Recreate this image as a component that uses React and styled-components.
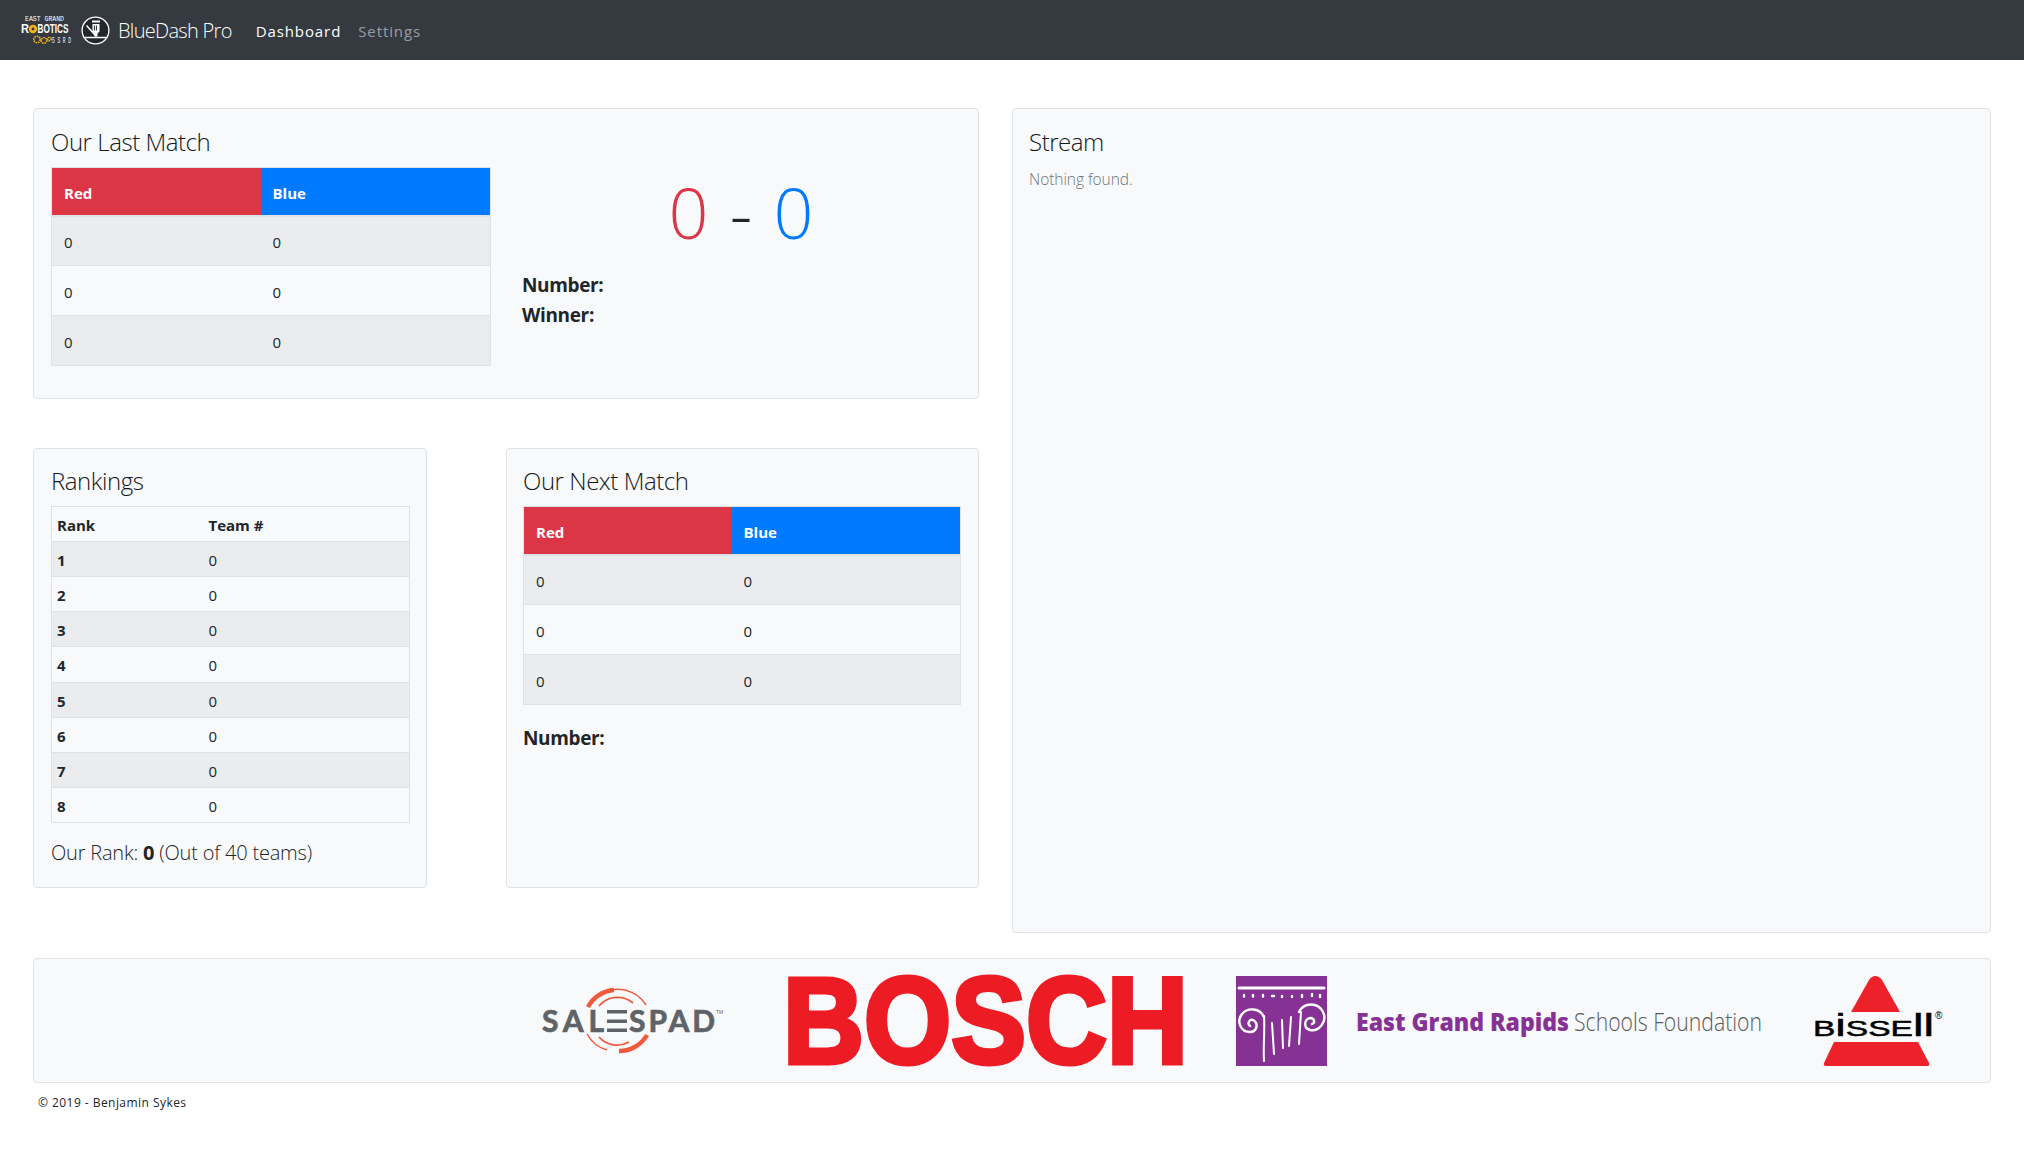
import React from "react";
import styled, { createGlobalStyle } from "styled-components";

const FONT = `"Open Sans", "Noto Sans", "Liberation Sans", sans-serif`;

const Global = createGlobalStyle`
  html, body { margin: 0; padding: 0; background: #fff; }
  body { font-family: ${FONT}; color: #212529; }
  * { box-sizing: border-box; }
  svg { overflow: visible; }
`;

const Navbar = styled.nav`
  height: 60px;
  background: #343a40;
  display: flex;
  align-items: center;
  padding-left: 20px;
`;
const BrandLogos = styled.div`
  display: flex;
  align-items: center;
  gap: 9px;
`;
const BrandName = styled.span`
  margin-left: 8px;
  color: #fff;
  font-size: 20px;
  font-weight: 300;
  letter-spacing: -0.7px;
`;
const NavLinks = styled.div`
  display: flex;
  gap: 17px;
  margin-left: 24px;
  padding-top: 2px;
`;
const NavLink = styled.span`
  font-size: 15px;
  letter-spacing: 0.9px;
  color: ${(p) => (p.$active ? "#fff" : "rgba(255,255,255,.5)")};
`;

const Main = styled.main`
  padding: 48px 33px 0;
  display: grid;
  grid-template-columns: 946px 979px;
  column-gap: 33px;
`;
const LeftColumn = styled.div`
  display: flex;
  flex-direction: column;
  gap: 49px;
  padding-bottom: 45px;
`;
const Card = styled.section`
  background: #f8f9fa;
  border: 1px solid #dfe3e7;
  border-radius: 4px;
  padding: ${(p) => p.$top || 12}px 16px 0 ${(p) => p.$left || 16}px;
  height: ${(p) => (p.$height ? `${p.$height}px` : "auto")};
`;
const Title = styled.h4`
  margin: 0 0 5px;
  font-size: 24px;
  line-height: 40px;
  font-weight: 350;
  letter-spacing: -0.45px;
  color: #15181b;
`;
const MatchBody = styled.div`
  display: flex;
  gap: 31px;
`;
const ScorePanel = styled.div`
  width: 438px;
  display: flex;
  flex-direction: column;
`;
const Score = styled.div`
  text-align: center;
  font-size: 70px;
  font-weight: 300;
  line-height: 90px;
  height: 98px;
  margin-bottom: 6px;
  word-spacing: 3px;
  color: #212529;
`;
const ScoreRed = styled.span`color: #dc3545;`;
const ScoreBlue = styled.span`color: #007bff;`;
const Fact = styled.div`
  font-size: 19px;
  font-weight: 700;
  line-height: 29.5px;
  letter-spacing: -0.35px;
`;
const LowerRow = styled.div`
  display: grid;
  grid-template-columns: 394px 473px;
  column-gap: 79px;
`;
const MatchTable = styled.table`
  width: ${(p) => p.$width}px;
  height: 199px;
  table-layout: fixed;
  border-collapse: collapse;
  border: 1px solid #dee2e6;
  font-size: 15px;
  flex: none;
`;
const TeamHead = styled.th`
  height: 48px;
  padding: 4px 12px 0;
  width: ${(p) => (p.$w ? `${p.$w}px` : "auto")};
  text-align: left;
  color: #fff;
  font-weight: 700;
  font-size: 15px;
  background: ${(p) => (p.$red ? "#dc3545" : "#007bff")};
  border-bottom: 2px solid #dee2e6;
`;
const Row = styled.tr`
  background: ${(p) => (p.$odd ? "#ebecee" : "transparent")};
`;
const Cell = styled.td`
  height: 49px;
  padding: 3px 12px 0;
  border-top: 1px solid #dee2e6;
`;
const RankTable = styled.table`
  width: 359px;
  height: 317px;
  table-layout: fixed;
  border-collapse: collapse;
  border: 1px solid #dee2e6;
  font-size: 15px;
`;
const RankHead = styled.th`
  height: 35px;
  padding: 2px 5px 0;
  text-align: left;
  width: ${(p) => p.$w || "auto"};
  font-weight: 700;
`;
const RankCell = styled.td`
  height: 35px;
  padding: 2px 5px 0;
  border-top: 1px solid #dee2e6;
  font-weight: ${(p) => (p.$bold ? 700 : 400)};
`;
const RankLine = styled.p`
  margin: 16px 0 0;
  font-size: 20px;
  line-height: 28px;
  font-weight: 300;
  letter-spacing: -0.2px;
  color: #212529;
  b { font-weight: 700; }
`;
const NextFact = styled(Fact)`
  margin-top: 19px;
`;
const Muted = styled.p`
  margin: 3px 0 0;
  font-size: 15.5px;
  line-height: 24px;
  font-weight: 300;
  letter-spacing: -0.05px;
  color: #6c757d;
`;
const SponsorBar = styled.section`
  margin: 25px 33px 0;
  height: 125px;
  background: #f8f9fa;
  border: 1px solid #dfe3e7;
  border-radius: 4px;
  display: flex;
  align-items: center;
  padding-top: 1px;
  padding-left: 507px;
`;
const SalesLogo = styled.svg`
  width: 183px; height: 66px; flex: none;
`;
const BoschLogo = styled.svg`
  width: 397px; height: 92px; margin-left: 63px; flex: none;
`;
const ColumnLogo = styled.svg`
  width: 91px; height: 90px; margin-left: 52px; flex: none;
`;
const EgrLogo = styled.svg`
  width: 406px; height: 40px; margin-left: 29px; flex: none;
`;
const BissellLogo = styled.svg`
  width: 132px; height: 92px; margin-left: 51px; flex: none;
`;
const Footer = styled.footer`
  margin: 11px 0 0 38px;
  font-size: 12px;
  line-height: 18px;
  letter-spacing: 0.45px;
  color: #212529;
`;

const RobLogo = () => (
  <svg width="52" height="30" viewBox="0 0 52 30">
    <text x="5" y="5.5" textLength="39" lengthAdjust="spacingAndGlyphs" fontFamily="Liberation Mono" fontSize="6.5" fill="#fff">EAST GRAND</text>
    <text x="1" y="18" textLength="8" lengthAdjust="spacingAndGlyphs" fontFamily="Liberation Sans" fontWeight="700" fontSize="12" fill="#fff">R</text>
    <circle cx="13" cy="14" r="4.2" fill="#f4b21a" />
    <circle cx="13" cy="14" r="1.4" fill="#343a40" />
    <text x="17.5" y="18" textLength="31" lengthAdjust="spacingAndGlyphs" fontFamily="Liberation Sans" fontWeight="700" fontSize="12" fill="#fff">BOTICS</text>
    <g fill="none" stroke="#f4b21a" strokeWidth="1.6">
      <circle cx="17" cy="24.5" r="3.2" strokeDasharray="1.6 .8" />
      <circle cx="24" cy="25.5" r="2.8" strokeDasharray="1.6 .8" />
      <circle cx="29.5" cy="24" r="1.8" strokeDasharray="1.4 .7" />
    </g>
    <text x="32" y="28" textLength="19" lengthAdjust="spacingAndGlyphs" fontFamily="Liberation Mono" fontSize="9" fill="#fff">5 S R D</text>
  </svg>
);

const CncLogo = () => (
  <svg width="29" height="29" viewBox="0 0 29 29">
    <circle cx="14.5" cy="14.5" r="13.4" fill="#23272b" stroke="#fff" strokeWidth="1.3" />
    <rect x="11" y="4.5" width="8" height="2" fill="#fff" />
    <path d="M11.5 8h7v7.5l-2 2v3h-3v-3l-2-2z" fill="#fff" />
    <path d="M13.4 9.5v5M15.4 9.5v5" stroke="#23272b" strokeWidth="1" />
    <path d="M5.5 9.5L15 20" stroke="#fff" strokeWidth="1.5" />
    <path d="M2.5 21.5h24" stroke="#fff" strokeWidth="1.5" />
  </svg>
);

const Sales = () => (
  <SalesLogo viewBox="0 0 183 66">
    <g fill="none" stroke="#f05a3c" strokeLinecap="butt">
      <path d="M47 19 A32 32 0 0 1 73 2" strokeWidth="4.5" />
      <path d="M73 1.5 A33 33 0 0 1 105 17" strokeWidth="1.5" />
      <path d="M58 18 A24 24 0 0 1 92 15" strokeWidth="1.8" />
      <path d="M106 47 A32 32 0 0 1 78 63" strokeWidth="4.5" />
      <path d="M46 46 A33 33 0 0 0 66 62" strokeWidth="1.5" />
      <path d="M58 49 A24 24 0 0 0 88 54" strokeWidth="1.8" />
    </g>
    <text x="1" y="44" textLength="62" lengthAdjust="spacing" fontFamily="Lato, Liberation Sans" fontWeight="700" fontSize="30" fill="#5f6368" stroke="#5f6368" strokeWidth=".7">SAL</text>
    <g fill="#5f6368">
      <rect x="66" y="22" width="20" height="3.5" />
      <rect x="66" y="31.5" width="20" height="3.5" />
      <rect x="66" y="40.5" width="20" height="3.5" />
    </g>
    <text x="88" y="44" textLength="86" lengthAdjust="spacing" fontFamily="Lato, Liberation Sans" fontWeight="700" fontSize="30" fill="#5f6368" stroke="#5f6368" strokeWidth=".7">SPAD</text>
    <text x="175" y="26" fontFamily="Liberation Sans" fontSize="5" fill="#5f6368">TM</text>
  </SalesLogo>
);

const Bosch = () => (
  <BoschLogo viewBox="0 0 397 92">
    <text x="-4" y="88" textLength="405" lengthAdjust="spacingAndGlyphs" fontFamily="Liberation Sans" fontWeight="700" fontSize="122" fill="#ed1c24" stroke="#ed1c24" strokeWidth="5">BOSCH</text>
  </BoschLogo>
);

const Column = () => (
  <ColumnLogo viewBox="0 0 91 90">
    <rect width="91" height="90" fill="#863295" />
    <g fill="none" stroke="#fff" strokeLinecap="round">
      <path d="M3 12 H88" strokeWidth="3" />
      <path d="M8 19 v1.5 M17 19 v1.5 M27 19 v1.5 M36 20 h2 M46 20 v1 M56 20 v1 M66 19 v2 M76 18 v2 M84 19 v2" strokeWidth="2.4" />
      <path d="M28 41 C24 32 12 31 6 38 C0 46 5 56 14 56 C21 56 23 47 17 44 C13 43 11 48 14 50" strokeWidth="2.4" />
      <path d="M28 40 C29 55 27 70 28 85" strokeWidth="2" />
      <path d="M36 47 L38 78" strokeWidth="2" />
      <path d="M46 44 L47 72" strokeWidth="2" />
      <path d="M55 41 L53 70" strokeWidth="2" />
      <path d="M65 36 L63 68" strokeWidth="2" />
      <path d="M63 36 C68 26 82 26 87 36 C92 46 82 56 74 54 C67 52 68 42 75 42 C79 43 79 47 76 48" strokeWidth="2.4" />
    </g>
  </ColumnLogo>
);

const Egr = () => (
  <EgrLogo viewBox="0 0 406 40">
    <text x="0" y="30" textLength="213" lengthAdjust="spacingAndGlyphs" fontFamily="Open Sans" fontWeight="800" fontSize="25" fill="#863295">East Grand Rapids</text>
    <text x="218" y="30" textLength="188" lengthAdjust="spacingAndGlyphs" fontFamily="Open Sans" fontWeight="300" fontSize="25" fill="#58595b">Schools Foundation</text>
  </EgrLogo>
);

const Bissell = () => (
  <BissellLogo viewBox="0 0 132 92">
    <path d="M38 37 L56 5 Q59 1 62 1 Q66 1 69 5 L87 37 Z" fill="#ed2129" />
    <path d="M21 67 H105 L116 88 Q117 91 114 91 H13 Q10 91 11 88 Z" fill="#ed2129" />
    <text x="0" y="61" textLength="121" lengthAdjust="spacingAndGlyphs" fontFamily="Liberation Sans" fontSize="22" fill="#000" stroke="#000" strokeWidth=".5">
      B<tspan fontSize="31">i</tspan>SSE<tspan fontSize="31">ll</tspan>
    </text>
    <text x="122" y="44" fontFamily="Liberation Sans" fontSize="10" fill="#000">®</text>
  </BissellLogo>
);

const Lineup = ({ width, red }) => (
  <MatchTable $width={width}>
    <thead>
      <tr>
        <TeamHead $red $w={red}>Red</TeamHead>
        <TeamHead>Blue</TeamHead>
      </tr>
    </thead>
    <tbody>
      {[0, 1, 2].map((i) => (
        <Row key={i} $odd={i % 2 === 0}>
          <Cell>0</Cell>
          <Cell>0</Cell>
        </Row>
      ))}
    </tbody>
  </MatchTable>
);

export default function App() {
  return (
    <>
      <Global />
      <Navbar>
        <BrandLogos>
          <RobLogo />
          <CncLogo />
        </BrandLogos>
        <BrandName>BlueDash Pro</BrandName>
        <NavLinks>
          <NavLink $active>Dashboard</NavLink>
          <NavLink>Settings</NavLink>
        </NavLinks>
      </Navbar>
      <Main>
        <LeftColumn>
          <Card $height={291} $top={13} $left={17}>
            <Title>Our Last Match</Title>
            <MatchBody>
              <Lineup width={440} red={209} />
              <ScorePanel>
                <Score>
                  <ScoreRed>0</ScoreRed> - <ScoreBlue>0</ScoreBlue>
                </Score>
                <Fact>Number:</Fact>
                <Fact>Winner:</Fact>
              </ScorePanel>
            </MatchBody>
          </Card>
          <LowerRow>
            <Card $height={440} $left={17}>
              <Title>Rankings</Title>
              <RankTable>
                <thead>
                  <tr>
                    <RankHead $w="152px">Rank</RankHead>
                    <RankHead>Team #</RankHead>
                  </tr>
                </thead>
                <tbody>
                  {[1, 2, 3, 4, 5, 6, 7, 8].map((n) => (
                    <Row key={n} $odd={n % 2 === 1}>
                      <RankCell $bold>{n}</RankCell>
                      <RankCell>0</RankCell>
                    </Row>
                  ))}
                </tbody>
              </RankTable>
              <RankLine>
                Our Rank: <b>0</b> (Out of 40 teams)
              </RankLine>
            </Card>
            <Card $height={440}>
              <Title>Our Next Match</Title>
              <Lineup width={438} red={208} />
              <NextFact>Number:</NextFact>
            </Card>
          </LowerRow>
        </LeftColumn>
        <Card $top={13}>
          <Title>Stream</Title>
          <Muted>Nothing found.</Muted>
        </Card>
      </Main>
      <SponsorBar>
        <Sales />
        <Bosch />
        <Column />
        <Egr />
        <Bissell />
      </SponsorBar>
      <Footer>© 2019 - Benjamin Sykes</Footer>
    </>
  );
}
